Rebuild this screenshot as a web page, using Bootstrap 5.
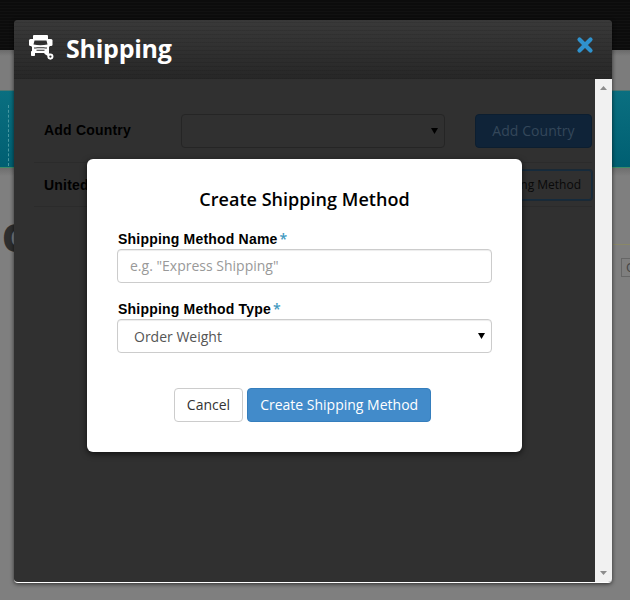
<!DOCTYPE html>
<html lang="en">
<head>
<meta charset="utf-8">
<meta name="viewport" content="width=device-width, initial-scale=1">
<title>Shipping</title>
<link href="https://cdn.jsdelivr.net/npm/bootstrap@5.3.0/dist/css/bootstrap.min.css" rel="stylesheet">
<style>
body{font-family:"Open Sans",sans-serif;font-size:14px;line-height:20px;background:#7f7f7f;height:600px;overflow:hidden;color:#000}
.page-top{height:50px;background:repeating-linear-gradient(0deg,#0c0c0c 0 2px,#111 2px 3px)}
.page-gap{height:40px;background:linear-gradient(#6a6a6a,#7c7c7c 6px)}
.page-hero{height:78px;background:linear-gradient(#0a6f80,#005f72);border-top:1px solid #4f7773;border-bottom:1px solid #3f8b67}
.page-hero i{display:block;margin:14px 0 0 8px;height:61px;border-left:1px dashed #4797a1}
.page-shade{height:8px;background:linear-gradient(#6e6e6e,#7f7f7f)}
.page-title{font-size:38px;line-height:44px;font-weight:800;color:#2e2e2e;padding-left:2px;padding-top:39px}
.page-line{right:0;top:244px;width:17px;height:1px;background:#898768}
.page-chip{left:621px;top:258px;width:40px;height:19px;border:1px solid #666;color:#444;font-size:13px;line-height:17px;padding-left:4px}
.panel{left:14px;top:20px;width:598px;height:563px;border-radius:4px;background:#303030;box-shadow:0 1px 4px rgba(0,0,0,.65);overflow:hidden;border-bottom:1px solid #fff}
.panel-head{height:59px;flex:none;padding:0 18px 0 14px;background:repeating-linear-gradient(0deg,rgba(0,0,0,.09) 0 1px,transparent 1px 4px),linear-gradient(#393939,#272727)}
.panel-head h1{font-size:25px;line-height:34px;font-weight:700;color:#fff;letter-spacing:-.25px;margin:-4px 0 0 10px}
.panel-head .truck{margin-top:-4px}
.panel-head .closer{margin-top:-10px}
.content-area{padding:35px 3px 0 30px}
.scroller{width:17px;background:#f1f1f1;padding:7px 0 7px}
.field-label{font-family:"Liberation Sans",Arial,sans-serif;font-weight:700;letter-spacing:.2px}
.line-row{border-bottom:1px solid #2b2b2b;margin-left:-10px;padding-left:10px}
.row-one{height:49px}
.row-one .field-label{width:137px;margin-top:-2px}
.row-two{height:44px}
.country-select{width:264px;height:34px;border:1px solid #252525;border-radius:4px;padding-right:6px}
.btn-country{width:117px;height:34px;background:#0f2338;color:#34475a;border-radius:4px;font-size:14px;letter-spacing:.05px;border:1px solid #0c1e30}
.btn-method{height:30px;width:150px;border:1px solid #152b3d;box-shadow:0 0 0 1px #1a2935;color:#090909;font-size:12px;border-radius:3px;padding-right:10px}
.dialog-box{left:87px;top:159px;width:435px;height:293px;background:#fff;border-radius:6px;box-shadow:0 2px 6px rgba(0,0,0,.65);padding:28px 30px 0}
.dialog-box h2{font-size:18px;line-height:25px;font-weight:600;margin:0 0 17px;letter-spacing:.03px}
.dialog-box .field-label{display:block;height:20px;line-height:20px;padding-left:1px}
.star{font-family:"Open Sans",sans-serif;color:#3f99bf;font-weight:600;margin-left:2px;letter-spacing:0}
.dialog-box .form-control{height:34px;border:1px solid #ccc;border-radius:4px;font-size:14px;line-height:20px;padding:5px 12px 7px;box-shadow:inset 0 1px 1px rgba(0,0,0,.075);color:#555}
.dialog-box .form-control::placeholder{color:#999;opacity:1}
.dialog-box .pick{padding:7px 6px 5px 16px}
.pick svg{margin-top:-3px}
.actions{margin-top:35px;padding-right:4px}
.dialog-box .btn{height:34px;font-size:14px;line-height:20px;padding:6px 12px;border-radius:4px}
.btn-cancel{border:1px solid #ccc;color:#333;background:#fff}
.btn-create{border:1px solid #357ebd;color:#fff;background:#428bca}
</style>
</head>
<body>
<div class="page-top"></div>
<div class="page-gap"></div>
<div class="page-hero overflow-hidden"><i></i></div>
<div class="page-shade"></div>
<div class="page-title">O</div>
<div class="page-line position-absolute"></div>
<div class="page-chip position-absolute">Q</div>

<section class="panel position-absolute d-flex flex-column">
  <header class="panel-head d-flex align-items-center">
    <svg class="truck" width="28" height="26" viewBox="0 0 28 26">
      <g fill="#fff">
        <path fill-rule="evenodd" d="M5 1Q5 0 6 0H19Q20 0 20 1V4H22V11L21 12V18H4V12L3 11V4H5ZM6.500 5.500L5.500 9.500Q12.500 11 19.500 9.500L18.500 5.500Z"/>
        <rect x="1" y="4" width="3.500" height="7" rx="1.500"/><rect x="21" y="4" width="3.500" height="7" rx="1.500"/>
        <rect x="3" y="16" width="4" height="5" rx=".8"/>
      </g>
      <path d="M6 13H8.500M16.500 13H19M8.500 12.800H16.500M8.500 15.300H16.500" stroke="#2e2e2e" stroke-width="1.100"/>
      <path d="M17 17.500L21 20" stroke="#fff" stroke-width="3"/>
      <circle cx="22.400" cy="21.600" r="2.100" fill="#2e2e2e" stroke="#fff" stroke-width="1.900"/>
    </svg>
    <h1>Shipping</h1>
    <svg class="closer ms-auto" width="18" height="18" viewBox="0 0 18 18"><path d="M3.500 3.500L14.500 14.500M14.500 3.500L3.500 14.500" stroke="#2f92cd" stroke-width="4.200" stroke-linecap="round"/></svg>
  </header>
  <div class="d-flex flex-grow-1">
    <div class="content-area flex-grow-1">
      <div class="line-row row-one d-flex align-items-start">
        <div class="d-flex align-items-center w-100">
          <span class="field-label text-nowrap">Add Country</span>
          <div class="country-select d-flex align-items-center justify-content-end"><svg width="7" height="6" viewBox="0 0 7 6"><path d="M0 0H7L3.500 6Z"/></svg></div>
          <div class="btn-country ms-auto d-flex align-items-center justify-content-center">Add Country</div>
        </div>
      </div>
      <div class="line-row row-two d-flex align-items-center justify-content-between">
        <span class="field-label">United States</span>
        <div class="btn-method d-flex align-items-center justify-content-end text-nowrap">Add Shipping Method</div>
      </div>
    </div>
    <div class="scroller d-flex flex-column align-items-center justify-content-between">
      <svg width="7" height="4" viewBox="0 0 7 4"><path d="M0 4L3.500 0L7 4Z" fill="#8c8c8c"/></svg>
      <svg width="7" height="4" viewBox="0 0 7 4"><path d="M0 0L3.500 4L7 0Z" fill="#8c8c8c"/></svg>
    </div>
  </div>
</section>

<form class="dialog-box position-absolute">
  <h2 class="text-center">Create Shipping Method</h2>
  <label class="field-label" for="mname">Shipping Method Name<span class="star">*</span></label>
  <input id="mname" class="form-control" placeholder='e.g. "Express Shipping"'>
  <label class="field-label mt-3" for="mtype">Shipping Method Type<span class="star">*</span></label>
  <div id="mtype" class="form-control pick d-flex align-items-center justify-content-between">Order Weight<svg width="7" height="6" viewBox="0 0 7 6"><path d="M0 0H7L3.500 6Z"/></svg></div>
  <div class="d-flex justify-content-center gap-1 actions">
    <button type="button" class="btn btn-cancel">Cancel</button>
    <button type="button" class="btn btn-create">Create Shipping Method</button>
  </div>
</form>
<script src="https://cdn.jsdelivr.net/npm/bootstrap@5.3.0/dist/js/bootstrap.bundle.min.js"></script>
</body>
</html>
